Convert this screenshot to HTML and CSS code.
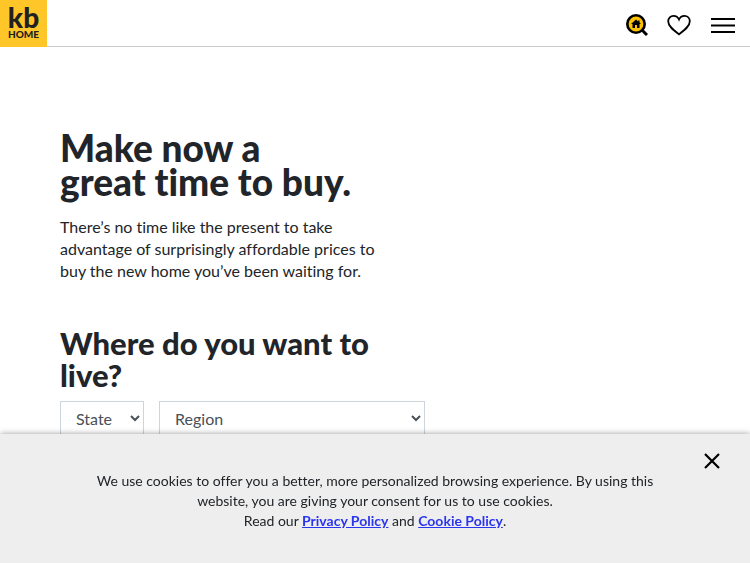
FILE: index.html
```html
<!DOCTYPE html>
<html lang="en">
  <head>
    <meta charset="UTF-8" />
    <meta name="viewport" content="width=device-width, initial-scale=1.0" />
    <title>KB Home</title>
    <link rel="stylesheet" href="styles.css">
  </head>
  <body>
    <header class="site-header">
      <a class="logo" href="/" aria-label="KB Home">
        <span class="logo-kb">kb</span>
        <span class="logo-home">HOME</span>
      </a>
      <nav class="tools">
        <a href="/search" aria-label="Find a home">
          <svg width="22" height="22" viewBox="0 0 22 22">
            <path d="M16 16l5 5" stroke="#000" stroke-width="3" />
            <circle cx="10" cy="10" r="8.700" fill="#fdc100" stroke="#000" stroke-width="2.600" />
            <path d="M10 5.500l-5 4.500h1.500v4h2.500v-3h2v3h2.500v-4h1.500l-1.500-1.400v-2h-1.300v.9z" />
          </svg>
        </a>
        <a href="/favorites" aria-label="Favorites">
          <svg width="24" height="24" viewBox="0 0 24 24">
            <path d="M12 21.300C7 17.500 1.200 13.500 1.200 8.300C1.200 5 3.700 2.800 6.500 2.800C9 2.800 11 4.200 12 6.500C13 4.200 15 2.800 17.500 2.800C20.300 2.800 22.800 5 22.800 8.300C22.800 13.500 17 17.500 12 21.300z" fill="none" stroke="#000" stroke-width="1.800" />
          </svg>
        </a>
        <button type="button" aria-label="Menu">
          <svg width="24" height="24" viewBox="0 0 24 24">
            <path d="M0 6h24M0 12.500h24M0 19h24" stroke="#000" stroke-width="2" />
          </svg>
        </button>
      </nav>
    </header>

    <main class="hero">
      <h1>Make now a<br>great time to buy.</h1>
      <p>There’s no time like the present to take advantage of surprisingly affordable prices to buy the new home you’ve been waiting for.</p>

      <form class="finder">
        <h2>Where do you want to live?</h2>
        <div class="fields">
          <select name="state" aria-label="State">
            <option>State</option>
          </select>
          <select name="region" aria-label="Region">
            <option>Region</option>
          </select>
        </div>
      </form>
    </main>

    <aside class="cookies">
      <button class="close" type="button" aria-label="Close">
        <svg width="16" height="16" viewBox="0 0 16 16">
          <path d="M1 1l14 14M15 1l-14 14" stroke="#000" stroke-width="2.200" />
        </svg>
      </button>
      <p>We use cookies to offer you a better, more personalized browsing experience. By using this website, you are giving your consent for us to use cookies.</p>
      <p>Read our <a href="/privacy-policy">Privacy Policy</a> and <a href="/cookie-policy">Cookie Policy</a>.</p>
    </aside>
  </body>
</html>
```
FILE: styles.css
```css
* {
  box-sizing: border-box;
  margin: 0;
  padding: 0;
}
body {
  background: #fff;
  color: #212529;
  font-family: Lato, sans-serif;
  font-size: 16px;
  font-variant-ligatures: none;
}
button {
  border: 0;
  background: transparent;
  cursor: pointer;
}
svg {
  display: block;
}
.site-header {
  display: flex;
  align-items: center;
  justify-content: space-between;
  border-bottom: 1px solid #ccc;
}
.logo {
  display: flex;
  flex-direction: column;
  align-items: center;
  width: 47px;
  height: 47px;
  margin-bottom: -1px;
  padding-top: 6px;
  background: #ffc629;
  color: #212121;
  font-weight: 900;
  text-decoration: none;
}
.logo-kb {
  font-size: 28px;
  line-height: 23px;
}
.logo-home {
  font-size: 10px;
  line-height: 11px;
}
.tools {
  display: flex;
  align-items: center;
  gap: 19px;
  padding: 4px 15px 0 0;

  & button {
    margin-left: 1px;
  }
}
.hero {
  padding: 84px 60px;

  & h1 {
    font-size: 37px;
    font-weight: 900;
    line-height: 34px;
  }
  & p {
    width: 50%;
    margin-top: 17px;
    line-height: 22px;
  }
}
.finder {
  width: 58%;
  margin-top: 45px;

  & h2 {
    font-size: 31px;
    font-weight: 900;
    line-height: 32px;
  }
}
.fields {
  display: grid;
  grid-template-columns: 23% 1fr;
  gap: 15px;
  margin-top: 10px;

  & select {
    width: 100%;
    height: 34px;
    padding-left: 11px;
    border: 1px solid #ced4da;
    border-radius: 0;
    background: #fff;
    color: #495057;
    font-family: inherit;
    font-size: 16px;
  }
}
.cookies {
  position: fixed;
  right: 0;
  bottom: 0;
  left: 0;
  padding: 37px 80px 32px;
  background: #eee;
  box-shadow: 0 0 6px rgba(0, 0, 0, 0.4);
  font-size: 14px;
  line-height: 20px;
  text-align: center;

  & a {
    color: #2a35ee;
    font-weight: bold;
  }
}
.close {
  position: absolute;
  top: 19px;
  right: 30px;
}
```
